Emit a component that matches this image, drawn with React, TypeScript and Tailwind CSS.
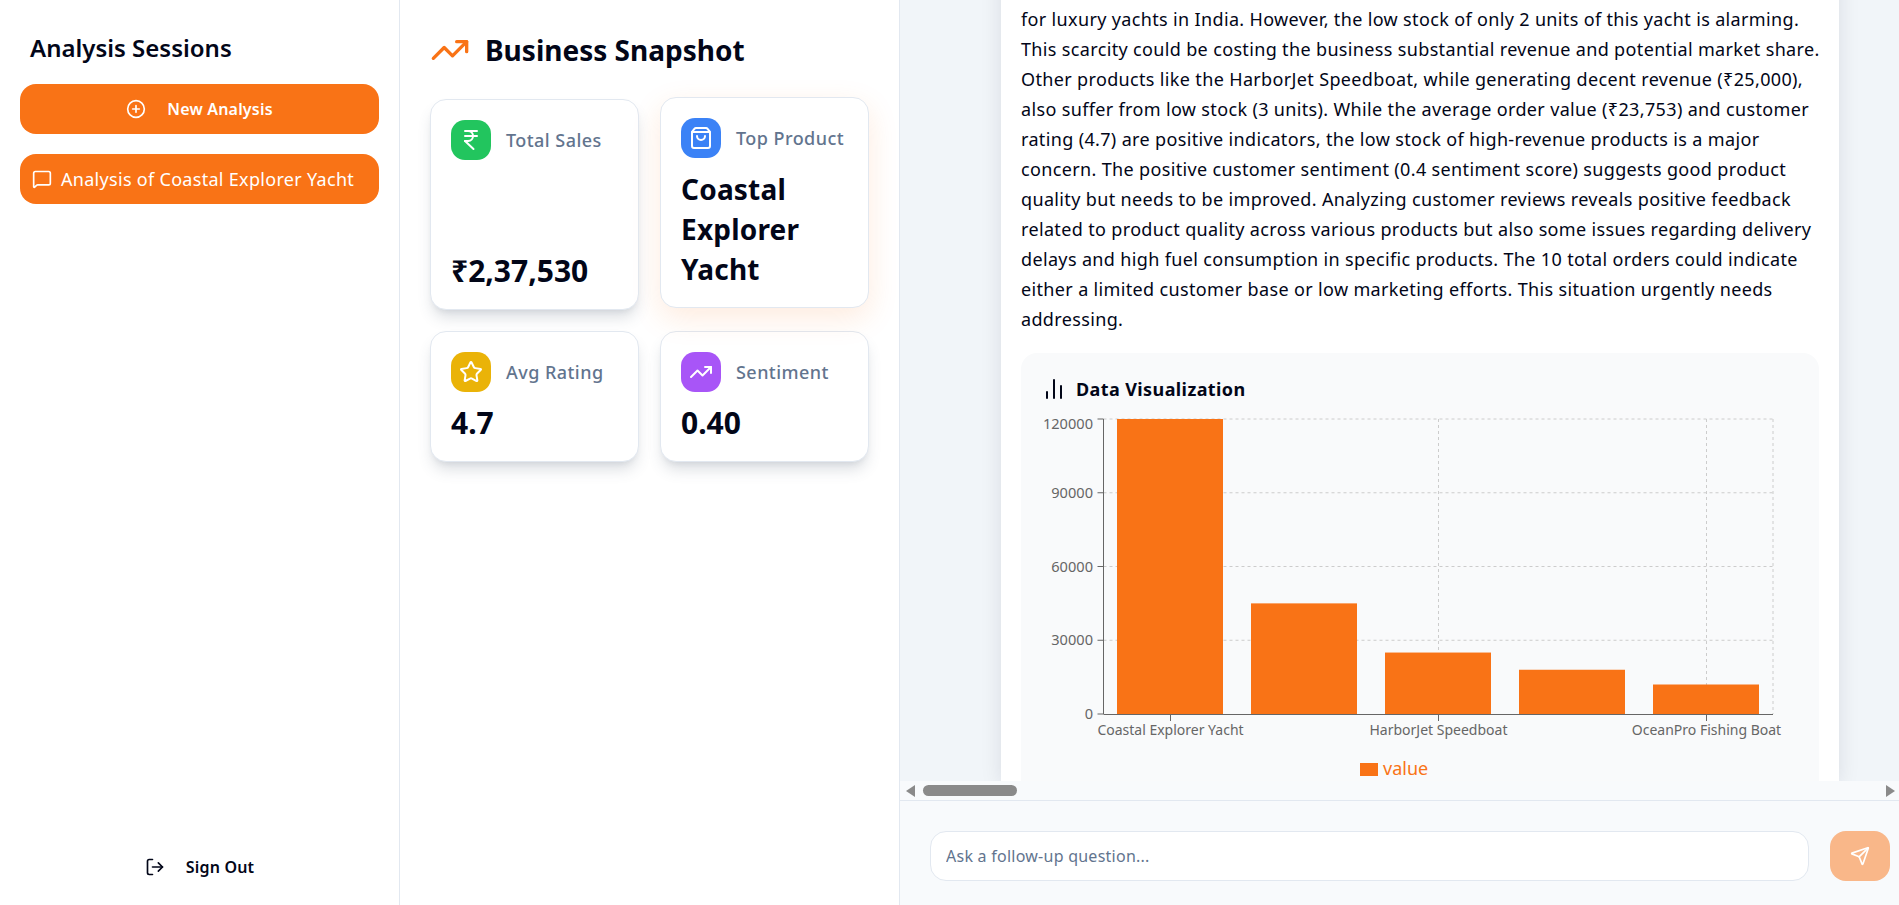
import { ChartNoAxesColumn, CirclePlus, IndianRupee, LogOut, MessageSquare, Send, ShoppingBag, Star, TrendingUp } from "lucide-react";

const font = { fontFamily: '"Noto Sans", sans-serif' };

const bars = [
  { x: 1117, value: 120000 },
  { x: 1251, value: 45000 },
  { x: 1385, value: 25000 },
  { x: 1519, value: 18000 },
  { x: 1653, value: 12000 },
];

const lines = [
  "appears to be a major seller and the clear leader of high (potential) market demand",
  "for luxury yachts in India. However, the low stock of only 2 units of this yacht is alarming.",
  "This scarcity could be costing the business substantial revenue and potential market share.",
  "Other products like the HarborJet Speedboat, while generating decent revenue (₹25,000),",
  "also suffer from low stock (3 units). While the average order value (₹23,753) and customer",
  "rating (4.7) are positive indicators, the low stock of high-revenue products is a major",
  "concern. The positive customer sentiment (0.4 sentiment score) suggests good product",
  "quality but needs to be improved. Analyzing customer reviews reveals positive feedback",
  "related to product quality across various products but also some issues regarding delivery",
  "delays and high fuel consumption in specific products. The 10 total orders could indicate",
  "either a limited customer base or low marketing efforts. This situation urgently needs",
  "addressing.",
];

function Chart() {
  // viewBox is in page coordinates, the svg ends where the scroll area clips it
  const ticks = [
    { label: "120000", y: 419 },
    { label: "90000", y: 492.75 },
    { label: "60000", y: 566.5 },
    { label: "30000", y: 640.25 },
    { label: "0", y: 714 },
  ];
  const vgrid = [1170.5, 1438.5, 1706.5, 1773];
  return (
    <svg width="798" height="380" viewBox="1021 401 798 380" className="block">
      {ticks.slice(0, 4).map((t) => (
        <line key={t.label} x1="1103.5" x2="1773" y1={t.y} y2={t.y} stroke="#ccc" strokeDasharray="3 3" />
      ))}
      {vgrid.map((x) => (
        <line key={x} x1={x} x2={x} y1="419" y2="714" stroke="#ccc" strokeDasharray="3 3" />
      ))}
      {bars.map((b) => {
        const h = (b.value / 120000) * 295;
        return <rect key={b.x} x={b.x} y={714 - h} width="106" height={h} fill="#f97316" />;
      })}
      <line x1="1103.5" x2="1103.5" y1="419" y2="714" stroke="#666" />
      <line x1="1103.5" x2="1773" y1="714.5" y2="714.5" stroke="#666" />
      {ticks.map((t) => (
        <g key={t.label}>
          <line x1="1097.5" x2="1103.5" y1={t.y} y2={t.y} stroke="#666" />
          <text x="1093" y={t.y + (t.label === "120000" ? 10 : 5)} textAnchor="end" fontSize="14.6" fill="#666">
            {t.label}
          </text>
        </g>
      ))}
      {[
        { x: 1170.5, label: "Coastal Explorer Yacht" },
        { x: 1438.5, label: "HarborJet Speedboat" },
        { x: 1706.5, label: "OceanPro Fishing Boat" },
      ].map((t) => (
        <g key={t.label}>
          <line x1={t.x} x2={t.x} y1="715" y2="721" stroke="#666" />
          <text x={t.x} y="735" textAnchor="middle" fontSize="14" fill="#666">
            {t.label}
          </text>
        </g>
      ))}
      <rect x="1360" y="763" width="18" height="13" fill="#f97316" />
      <text x="1383" y="775" fontSize="18" fill="#f97316">
        value
      </text>
    </svg>
  );
}

function StatCard({
  icon,
  iconBg,
  label,
  value,
  lifted,
}: {
  icon: React.ReactNode;
  iconBg: string;
  label: string;
  value: string;
  lifted?: boolean;
}) {
  return (
    <div
      className={
        lifted
          ? "flex flex-col rounded-2xl border border-slate-200 bg-white pt-5 pr-5 pb-[18px] pl-5 -translate-y-0.5 shadow-[0_10px_30px_rgba(249,115,22,0.14)]"
          : "flex flex-col rounded-2xl border border-slate-200 bg-white pt-5 pr-5 pb-[18px] pl-5 shadow-[0_10px_15px_-3px_rgba(71,85,105,0.2),0_4px_6px_-4px_rgba(71,85,105,0.15)]"
      }
    >
      <div className="flex items-center gap-[15px]">
        <div className={`flex h-10 w-10 shrink-0 items-center justify-center rounded-[14px] text-white ${iconBg}`}>{icon}</div>
        <span className="text-lg font-medium tracking-[0.45px] text-slate-500">{label}</span>
      </div>
      <div className={lifted ? "mt-auto pt-[11px] text-[28px] leading-10 font-bold tracking-[0.2px] text-slate-950" : "mt-auto pt-[11px] text-3xl leading-10 font-bold text-slate-950"}>
        {value}
      </div>
    </div>
  );
}

export default function App() {
  return (
    <div className="flex h-[905px] w-[1899px] overflow-hidden bg-white text-slate-950" style={font}>
      {/* Sessions */}
      <aside className="flex w-[400px] shrink-0 flex-col border-r border-slate-200 px-5 pt-[30px] pb-5">
        <h2 className="px-2.5 text-2xl leading-9 font-semibold">Analysis Sessions</h2>
        <button className="mt-[18px] flex h-[50px] items-center justify-center gap-[21px] rounded-2xl bg-[#f97316] text-base font-semibold tracking-[0.2px] text-white">
          <CirclePlus size={20} />
          New Analysis
        </button>
        <button className="mt-5 flex h-[50px] items-center gap-[9px] rounded-2xl bg-[#f97316] px-3 text-lg tracking-[0.3px] text-white">
          <MessageSquare size={20} />
          Analysis of Coastal Explorer Yacht
        </button>
        <button className="mt-auto mb-[6px] flex h-6 items-center justify-center gap-[21px] text-base font-semibold tracking-[0.2px]">
          <LogOut size={20} />
          Sign Out
        </button>
      </aside>

      {/* Snapshot */}
      <section className="w-[499px] shrink-0 pt-[30px] pl-[30px]">
        <div className="flex h-10 items-center gap-[15px]">
          <TrendingUp size={40} className="text-[#f97316]" />
          <h1 className="text-[28px] font-bold">Business Snapshot</h1>
        </div>
        <div className="mt-[29px] grid w-[439px] grid-cols-2 gap-x-[21px] gap-y-[21px]">
          <StatCard icon={<IndianRupee size={24} />} iconBg="bg-[#22c55e]" label="Total Sales" value="₹2,37,530" />
          <StatCard icon={<ShoppingBag size={24} />} iconBg="bg-[#3b82f6]" label="Top Product" value="Coastal Explorer Yacht" lifted />
          <StatCard icon={<Star size={24} />} iconBg="bg-[#eab308]" label="Avg Rating" value="4.7" />
          <StatCard icon={<TrendingUp size={24} />} iconBg="bg-[#a855f7]" label="Sentiment" value="0.40" />
        </div>
      </section>

      {/* Chat */}
      <main className="flex min-w-0 flex-1 flex-col border-l border-slate-200 bg-slate-100">
        <div className="flex h-[781px] shrink-0 flex-col justify-end overflow-hidden pr-[60px] pl-[101px]">
          <div className="shrink-0 bg-white px-5 shadow-[0_4px_20px_rgba(15,23,42,0.1)]">
            <div className="text-lg leading-[30px] tracking-[0.35px] text-slate-950">
              {lines.map((l) => (
                <div key={l} className="whitespace-nowrap">
                  {l}
                </div>
              ))}
            </div>
            <div className="mt-[19px] rounded-t-2xl bg-gray-50 pt-6">
              <div className="flex items-center gap-2.5 pl-[21px] text-lg leading-6 font-bold tracking-[0.4px]">
                <ChartNoAxesColumn size={24} />
                Data Visualization
              </div>
              <Chart />
            </div>
          </div>
        </div>
        {/* fake horizontal scrollbar */}
        <div className="flex h-[19px] shrink-0 items-center bg-slate-50 pr-1 pl-[6px]">
          <span className="h-0 w-0 border-y-[6px] border-r-[9px] border-y-transparent border-r-[#8a8a8a]" />
          <span className="ml-2 h-[11px] w-[94px] rounded-full bg-[#8a8a8a]" />
          <span className="ml-auto h-0 w-0 border-y-[6px] border-l-[9px] border-y-transparent border-l-[#8a8a8a]" />
        </div>
        <div className="flex flex-1 items-start gap-[21px] border-t border-slate-200 bg-slate-50 pt-[30px] pr-[9px] pl-[30px]">
          <input
            placeholder="Ask a follow-up question..."
            className="h-[50px] flex-1 rounded-2xl border border-slate-200 bg-white px-[15px] text-base tracking-[0.25px] outline-none placeholder:text-slate-500"
            style={font}
          />
          <button className="flex h-[50px] w-[60px] items-center justify-center rounded-2xl bg-[#f97316]/50 text-white">
            <Send size={20} />
          </button>
        </div>
      </main>
    </div>
  );
}
